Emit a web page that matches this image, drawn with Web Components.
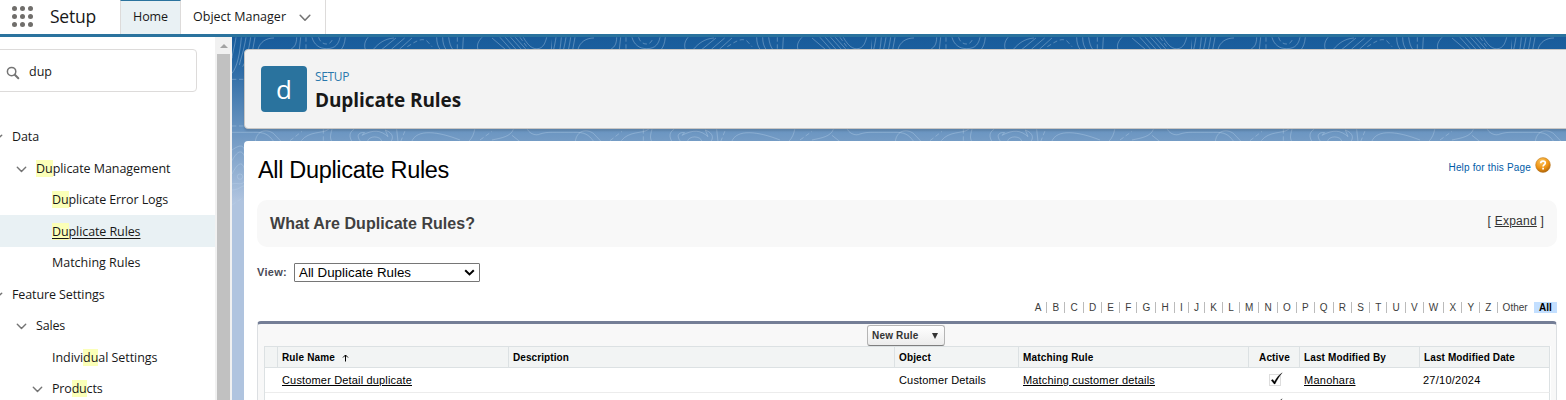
<!DOCTYPE html>
<html lang="en">
<head>
<meta charset="utf-8">
<title>Duplicate Rules</title>
<style>
html,body{margin:0;padding:0;height:100%;overflow:hidden;background:#fff}
</style>
</head>
<body>
<setup-app></setup-app>
<script>
const define = (name, html, after) => customElements.define(name, class extends HTMLElement {
  constructor(){
    super();
    const t = document.createElement('template');
    t.innerHTML = html;
    this.attachShadow({mode:'open'}).appendChild(t.content.cloneNode(true));
  }
  connectedCallback(){ if (after) after(this, this.shadowRoot); }
});

/* A label that spreads its letters to a given width; "link" underlines it. */
define('fit-text', `<style>:host{display:inline-block;white-space:nowrap}span{display:inline-block}:host([link]) span{text-decoration:underline;text-underline-offset:var(--uo,1px);text-decoration-thickness:1px}</style><span><slot></slot></span>`, (el, root) => {
  const w = parseFloat(el.getAttribute('w'));
  const fit = () => {
    const s = root.querySelector('span');
    const n = el.textContent.length;
    if (!w || !n) return;
    s.style.letterSpacing = '0';
    const now = s.getBoundingClientRect().width;
    if (now) s.style.letterSpacing = ((w - now) / n) + 'px';
  };
  requestAnimationFrame(fit);
});

define('chevron-icon', `<style>:host{display:block;width:12px;height:8px;flex:none}svg{display:block;width:100%;height:100%}</style>
<svg viewBox="0 0 12 8"><path d="M1.2 1.3 6 6.2l4.8-4.9" fill="none" stroke="#747474" stroke-width="1.6" stroke-linecap="round" stroke-linejoin="round"/></svg>`);

define('app-header', `<style>
:host{display:flex;height:34px;border-bottom:3px solid #2a739e;background:#fff;font-family:"Open Sans",sans-serif;color:#181818;box-sizing:content-box}
.grid{display:grid;grid-template-columns:repeat(3,5px);gap:3px;padding:6px 0 0 12px;align-content:start}
.grid i{width:5px;height:5px;border-radius:50%;background:#706e6b}
.name{font-size:17.5px;line-height:33px;margin-left:17px;width:70px}
.tab{box-sizing:border-box;height:34px;line-height:33px;font-size:12.5px;border-right:1px solid #dddbda;display:flex}
.home{border-left:1px solid #dddbda;border-top:1px solid #2a739e;background:#e9f1f4;width:61px;padding-left:12px;line-height:31px}
.om{width:145px;padding-left:12px}
chevron-icon{margin:14px 0 0 13px}
</style>
<div class="grid"><i></i><i></i><i></i><i></i><i></i><i></i><i></i><i></i><i></i></div>
<div class="name"><fit-text w="46">Setup</fit-text></div>
<div class="tab home"><fit-text w="35">Home</fit-text></div>
<div class="tab om"><fit-text w="93">Object Manager</fit-text><chevron-icon></chevron-icon></div>`);

define('tree-row', `<style>
:host{display:flex;height:31.5px;line-height:31px;box-sizing:border-box;padding-top:1px;align-items:center;font-size:12.5px;color:#181818;overflow:hidden;--uo:2px}
:host([selected]){background:#e9f1f4}
chevron-icon{visibility:hidden;width:11px;height:7px;margin-right:9.5px;margin-top:2px}
:host([open]) chevron-icon{visibility:visible}
:host([level="1"]) chevron-icon{margin-left:-8.5px}
:host([level="2"]) chevron-icon{margin-left:15.5px}
:host([level="3"]) chevron-icon{margin-left:31.5px}
</style><chevron-icon></chevron-icon><slot></slot>`);

define('setup-sidebar', `<style>
:host{display:flex;width:232px;flex:none;background:#fff;font-family:"Open Sans",sans-serif;overflow:hidden}
.main{width:215px;flex:none}
.search{box-sizing:border-box;margin:12px 0 28.5px -6px;width:203px;height:43px;border:1px solid #dddbda;border-radius:4px;display:flex;align-items:center;font-size:12.5px;color:#181818}
.search svg{margin:4px 9px 0 11px;flex:none}
.search fit-text{margin-top:2px}
mark{background:#fbffb8;color:inherit;padding:0}
.bar{width:17px;background:#f1f1f1;display:flex;flex-direction:column;align-items:center}
.up{width:0;height:0;border:4px solid transparent;border-top:0;border-bottom:4px solid #a3a3a3;margin:7px 0 6px}
.thumb{width:13px;flex:1;background:#c1c1c1}
</style>
<div class="main">
<div class="search"><svg width="14" height="14" viewBox="0 0 14 14"><circle cx="5.6" cy="5.6" r="4.2" fill="none" stroke="#747474" stroke-width="1.5"/><path d="m8.8 8.8 3.5 3.5" stroke="#747474" stroke-width="2" stroke-linecap="round"/></svg><fit-text w="23">dup</fit-text></div>
<tree-row level="1" open><fit-text w="27">Data</fit-text></tree-row>
<tree-row level="2" open><fit-text w="134.500"><mark>Du</mark>plicate Management</fit-text></tree-row>
<tree-row level="3"><fit-text w="116"><mark>Du</mark>plicate Error Logs</fit-text></tree-row>
<tree-row level="3" selected><fit-text w="88.5" link><mark>Du</mark>plicate Rules</fit-text></tree-row>
<tree-row level="3"><fit-text w="88.5">Matching Rules</fit-text></tree-row>
<tree-row level="1" open><fit-text w="92.5">Feature Settings</fit-text></tree-row>
<tree-row level="2" open><fit-text w="29">Sales</fit-text></tree-row>
<tree-row level="3"><fit-text w="105.500">Indivi<mark>du</mark>al Settings</fit-text></tree-row>
<tree-row level="3" open><fit-text w="50.5">Pro<mark>du</mark>cts</fit-text></tree-row>
</div>
<div class="bar"><div class="up"></div><div class="thumb"></div></div>`);

/* Contour-map backdrop: a 320px tile over a blue gradient. */
define('topo-backdrop', `<style>
:host{position:absolute;inset:0;z-index:0;background:linear-gradient(#195c9b 0,#1b5f9e 14px,#b0c4df 164px,#b0c4df 100%)}
svg{display:block}
</style>
<svg width="1334" height="180"><defs><pattern id="p" width="320" height="180" patternUnits="userSpaceOnUse">
<g transform="translate(-2 -7) scale(.33333)" fill="none" stroke="#b9d2ea" stroke-opacity=".38" stroke-width="3">
<path d="M18 22C14 50 6 75 6 85M34 22C30 70 22 110 6 130M48 22C42 60 34 80 28 105M62 22C56 60 50 90 38 110M75 22 68 60M84 58C90 36 108 24 132 24"/>
<path d="M200 22C200 40 194 52 184 56M212 22 208 58M246 22C252 44 268 56 290 56 318 56 326 40 330 22M346 22C344 40 340 50 334 58M414 22C404 34 402 46 406 58"/>
<path d="M228 22V58M266 22C272 46 302 50 308 26M532 50C552 38 572 22 590 32L606 50M682 22V58M1012 22V58M870 22 896 58" stroke-dasharray="13 8"/>
<path d="M430 58C446 40 464 26 492 24M456 58 498 24M484 58 524 24M508 58 546 24M620 22C620 38 624 50 630 58M638 22C638 38 642 50 648 58M656 22C658 38 662 50 668 58M700 22 698 58M756 22C744 34 740 46 744 58M786 24 826 58M810 22 842 58M826 22 858 58M842 22 874 58M856 22 888 58M880 22C896 50 910 58 924 56 940 54 946 38 950 22M964 58 968 22"/>
<path d="M6 307H70C104 306 116 314 130 333M76 335C80 300 110 296 130 310L154 335M214 332C238 302 276 312 296 298M306 298C300 318 300 326 306 335M366 335C352 312 366 302 372 298M392 335C374 312 392 306 404 308L396 316C430 298 452 300 474 320L466 300C492 310 490 326 482 335M500 298 504 335M545 335C560 296 624 304 690 330M716 335C728 322 732 310 734 298M786 330C814 324 842 320 850 298M892 298C900 312 918 318 930 312 942 308 954 307 966 307M412 335C416 316 452 316 456 335M846 316 870 335"/>
<path d="M6 148H44M6 288H44M180 332 216 304M280 298V335M512 335 526 300M750 330 786 304M6 525 36 505" stroke-dasharray="13 8"/>
<path d="M6 360C34 340 42 348 44 364M6 392C20 366 36 352 46 386M6 432C28 388 40 400 44 420M6 462C24 456 36 470 46 450M6 480C26 480 30 470 46 466" /><circle cx="30" cy="440" r="8"/>
</g></pattern></defs><rect width="1334" height="180" fill="url(#p)"/></svg>`);

define('page-title', `<style>
:host{display:flex;box-sizing:border-box;height:80px;width:1330px;padding:16px;border:1px solid #c9c7c5;border-radius:4px;background:#f3f3f3;box-shadow:0 2px 2px rgba(0,0,0,.12);font-family:"Open Sans",sans-serif}
.ico{width:46px;height:46px;border-radius:4px;background:#2a739e;color:#fff;font-size:26px;line-height:46px;text-align:center}
.t{margin-left:8px;padding-top:1px}
.s{font-size:12px;line-height:20px;color:#2a78ad}
h1{margin:0;font-size:19px;line-height:26px;font-weight:700;color:#181818}
</style>
<div class="ico">d</div><div class="t"><div class="s"><fit-text w="34">SETUP</fit-text></div><h1><fit-text w="146">Duplicate Rules</fit-text></h1></div>`);

define('alpha-nav', `<style>
:host{display:flex;justify-content:flex-end;font-size:10px;line-height:11px;color:#3c3c3c}
span{padding:0 5.12px;border-right:1px solid #bbb;height:11px}
span:last-child{border:0;background:#c3dfff;color:#000;font-weight:700;padding:0 5.3px}
span:nth-last-child(2){border:0;padding-right:6px}
</style>`, (el, root) => {
  if (root.querySelector('span')) return;
  for (const x of [...'ABCDEFGHIJKLMNOPQRSTUVWXYZ', 'Other', 'All']) {
    const s = document.createElement('span'); s.textContent = x; root.appendChild(s);
  }
});

define('check-icon', `<style>:host{display:block}svg{display:block}</style>
<svg width="16" height="15" viewBox="0 0 16 15"><rect x="1.500" y="2.500" width="11" height="11" fill="none" stroke="#bbb" stroke-dasharray="1 1"/><path d="M3.200 8.300 4.800 7.400 6.400 9.700C8.600 5.800 11 3 14.200.8 11.300 4.200 9 8 7 12H6.200z" fill="#000" stroke="#000" stroke-width=".3"/></svg>`);

define('rules-table', `<style>
:host{display:block;box-sizing:border-box;height:100px;border:1px solid #dcdfe2;border-top:3px solid #747e96;border-radius:4px 4px 0 0;background:#f8f8f8;padding:0 7px 0 6px}
.bar{height:22px;display:flex;padding-left:603px}
button{box-sizing:border-box;margin:1px 0 0;width:78px;height:21px;border:1px solid #b5b5b5;border-bottom-color:#7f7f7f;border-radius:3px;background:linear-gradient(#fff,#ececec);font:700 10px/19px "Liberation Sans",sans-serif;color:#333;display:flex;align-items:center;padding:0 0 0 4px}
button i{border:3.5px solid transparent;border-top:6px solid #333;border-bottom:0;margin-left:13px}
.grid{display:grid;grid-template-columns:12px 231px 386px 124px 230px 51px 120px 131px;border-left:1px solid #dce1e3;width:1286px;background:#fff}
.grid>*{box-sizing:border-box;padding-left:4px;white-space:nowrap;overflow:hidden}
.h{height:22px;border:solid #dce1e3;border-width:1px 0 1px 1px;background:#f2f4f4;font-weight:700;font-size:10px;line-height:21px;color:#000}
.h:first-child{border-left:0}.h.z{border-right:1px solid #dce1e3}
.d{height:25px;border-bottom:1px solid #ececec;font-size:11px;line-height:24px;color:#000;padding-left:5px!important}
.d.z,.e.z{border-right:1px solid #dce1e3}
.d.z{padding-left:4px!important}
.e{height:10px}
.h svg{margin-left:7px;vertical-align:-1px}
.h.a{padding-left:10px}
check-icon{margin:4px 0 0 15px}
.e check-icon{margin:5px 0 0 16px}
</style>
<div class="bar"><button><fit-text w="46.5">New Rule</fit-text><i></i></button></div>
<div class="grid">
<div class="h"></div><div class="h"><fit-text w="53">Rule Name</fit-text><svg width="7" height="8" viewBox="0 0 7 8"><path d="M3.500 7.500V1M1 3.500 3.500 1 6 3.500" fill="none" stroke="#000"/></svg></div><div class="h"><fit-text w="56">Description</fit-text></div><div class="h"><fit-text w="32">Object</fit-text></div><div class="h"><fit-text w="70.500">Matching Rule</fit-text></div><div class="h a"><fit-text w="31">Active</fit-text></div><div class="h"><fit-text w="82">Last Modified By</fit-text></div><div class="h z"><fit-text w="91">Last Modified Date</fit-text></div>
<div class="d"></div><div class="d"><fit-text link w="130">Customer Detail duplicate</fit-text></div><div class="d"></div><div class="d"><fit-text w="87">Customer Details</fit-text></div><div class="d"><fit-text link w="132">Matching customer details</fit-text></div><div class="d"><check-icon></check-icon></div><div class="d"><fit-text link w="51.5">Manohara</fit-text></div><div class="d z"><fit-text w="57.5">27/10/2024</fit-text></div>
<div class="e"></div><div class="e"></div><div class="e"></div><div class="e"></div><div class="e"></div><div class="e"><check-icon></check-icon></div><div class="e"></div><div class="e z"></div>
</div>`);

define('rules-panel', `<style>
:host{display:block;box-sizing:border-box;margin-top:12px;width:1330px;height:270px;background:#fff;border-radius:4px 0 0 0;padding:0 17px 0 13px;font-family:"Liberation Sans",sans-serif}
.top{display:flex;justify-content:space-between;height:59px}
h2{margin:14px 0 0 1px;font-weight:400;font-size:23.500px;line-height:30px;color:#000}
.help{display:flex;font-size:10px;line-height:14px;color:#015ba7;padding-top:20px;margin-right:6px}
.help svg{margin:-4.500px 0 0 4px}
.info{display:flex;justify-content:space-between;box-sizing:border-box;height:47px;border-radius:10px;background:#f8f8f8;padding:0 13px;line-height:47px;font-weight:700;font-size:16px;color:#404040}
.info .x{font-weight:400;font-size:12px;line-height:42px;color:#333}
.info u{text-underline-offset:1px}
.view{display:flex;height:20px;margin-top:15px;align-items:center;font-weight:700;font-size:11px;color:#4a4a56}
.sel{box-sizing:border-box;margin-left:7px;width:186px;height:19px;border:1px solid #767676;border-radius:1px;display:flex;align-items:center;justify-content:space-between;padding:0 4px;color:#000;font-weight:400;font-size:13.33px}
alpha-nav{margin:20px 0 8px}
</style>
<div class="top"><h2><fit-text w="191">All Duplicate Rules</fit-text></h2><div class="help"><fit-text w="82.5">Help for this Page</fit-text>
<svg width="16" height="16" viewBox="0 0 16 16"><defs><radialGradient id="g" cx=".4" cy=".25" r=".8"><stop offset="0" stop-color="#fbc45c"/><stop offset=".6" stop-color="#ee9312"/><stop offset="1" stop-color="#a85f07"/></radialGradient></defs><circle cx="8" cy="8" r="7.400" fill="url(#g)" stroke="#b87a28" stroke-width=".5"/><path d="M5.700 6.300C5.800 3.300 10.400 3.400 10.300 6 10.300 7.600 8.100 7.600 8.100 9.500M8.100 10.800V12.400" fill="none" stroke="#fff" stroke-width="1.700"/></svg></div></div>
<div class="info"><fit-text w="205">What Are Duplicate Rules?</fit-text><span class="x"><fit-text w="56.5">[ <u>Expand</u> ]</fit-text></span></div>
<div class="view"><fit-text w="30">View:</fit-text><div class="sel"><fit-text w="112">All Duplicate Rules</fit-text><svg width="11" height="7" viewBox="0 0 11 7"><path d="m1.200 1.200 4.300 4.200 4.300-4.200" fill="none" stroke="#000" stroke-width="2"/></svg></div></div>
<alpha-nav></alpha-nav>
<rules-table></rules-table>`);

define('setup-app', `<style>
:host{display:flex;flex-direction:column;height:400px;width:1566px;overflow:hidden}
.body{display:flex;flex:1;min-height:0}
main{position:relative;flex:1;overflow:hidden;padding:12px 0 0 12px}
page-title,rules-panel{position:relative;z-index:1}
</style>
<app-header></app-header>
<div class="body"><setup-sidebar></setup-sidebar><main><topo-backdrop></topo-backdrop><page-title></page-title><rules-panel></rules-panel></main></div>`);
</script>
</body>
</html>
